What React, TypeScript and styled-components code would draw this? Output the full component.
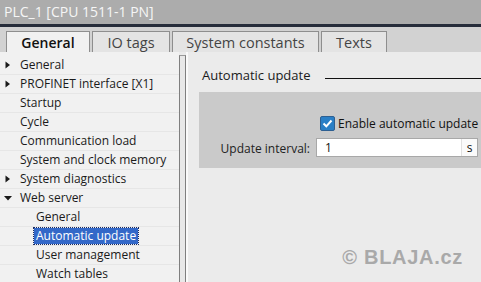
import styled, { createGlobalStyle } from "styled-components";

const GlobalStyle = createGlobalStyle`
  html, body {
    margin: 0;
    padding: 0;
    overflow: hidden;
    background: #ebebeb;
  }
  body {
    font-family: "Open Sans", "Noto Sans", sans-serif;
  }
`;

const Window = styled.div`
  width: 481px;
  height: 282px;
  display: flex;
  flex-direction: column;
  overflow: hidden;
`;

const TitleBar = styled.div`
  height: 24px;
  line-height: 24px;
  padding-left: 4px;
  background: #acacac;
  color: #f6f6f6;
  font-size: 14px;
  border-bottom: 3px solid #272d3b;
`;

const TabStrip = styled.div`
  height: 25px;
  display: flex;
  align-items: flex-end;
  gap: 2px;
  padding-left: 6px;
  background: #d2d2d2;
`;

type TabProps = {
  $active?: boolean;
  $width: number;
};

const Tab = styled.div<TabProps>`
  width: ${(props) => props.$width}px;
  height: 21px;
  box-sizing: border-box;
  display: flex;
  align-items: center;
  justify-content: center;
  border: 1px solid #8e8e8e;
  border-bottom: none;
  background: ${(props) => (props.$active ? "#f1f1f1" : "#e4e4e4")};
  color: ${(props) => (props.$active ? "#111" : "#444")};
  font-size: ${(props) => (props.$active ? 14 : 14.5)}px;
  font-weight: ${(props) => (props.$active ? 600 : 400)};
`;

const Body = styled.div`
  flex: 1;
  display: flex;
  min-height: 0;
`;

const Nav = styled.div`
  flex: none;
  width: 179px;
  background: #f1f1f1;
  padding-top: 4px;
  display: flex;
  flex-direction: column;
`;

type RowProps = {
  $level: number;
};

const NavRow = styled.div<RowProps>`
  height: 19px;
  flex: none;
  display: flex;
  align-items: center;
  padding-left: ${(props) => (props.$level === 1 ? 4 : 34)}px;
  border-bottom: 1px solid #e6e6e6;
  box-sizing: border-box;
  font-size: 12px;
  color: #1a1a1a;
  white-space: nowrap;
`;

const Arrow = styled.span`
  width: 14px;
  display: inline-flex;
  align-items: center;
`;

type LabelProps = {
  $selected?: boolean;
};

const NavLabel = styled.span<LabelProps>`
  padding: 0 2px;
  line-height: 16px;
  background: ${(props) => (props.$selected ? "#3368c8" : "transparent")};
  color: ${(props) => (props.$selected ? "#fff" : "inherit")};
  outline: ${(props) => (props.$selected ? "1px dotted #1a2a60" : "none")};
`;

const Splitter = styled.div`
  flex: none;
  width: 5px;
  margin-top: 3px;
  background: #e8e8e8;
  border-left: 1px solid #7f7f7f;
  border-right: 1px solid #7f7f7f;
  border-top: 1px solid #9a9a9a;
`;

const Content = styled.div`
  flex: 1;
  min-width: 0;
  background: #ebebeb;
  border-left: 2px solid #fafafa;
  display: flex;
  flex-direction: column;
  padding-left: 11px;
`;

const SectionHead = styled.div`
  display: flex;
  align-items: center;
  gap: 15px;
  margin-top: 14px;
  padding-left: 3px;
  height: 18px;
  font-size: 13px;
  color: #1a1a1a;
  white-space: nowrap;
`;

const HeadLine = styled.div`
  flex: 1;
  height: 1px;
  margin-top: 6px;
  background: #111;
`;

const SettingsBox = styled.div`
  margin-top: 8px;
  height: 76px;
  background: #cacaca;
  display: grid;
  grid-template-columns: 111px 1fr;
  grid-template-rows: 20px 20px;
  align-content: end;
  row-gap: 5px;
  padding-bottom: 10px;
  box-sizing: border-box;
`;

const Checkbox = styled.span`
  width: 13px;
  height: 13px;
  border: 1px solid #2d5f91;
  border-radius: 2px;
  background: #2a7fc6;
  display: inline-flex;
  align-items: center;
  justify-content: center;
  margin-right: 3px;
`;

const CheckCell = styled.label`
  grid-column: 2;
  display: flex;
  align-items: center;
  padding-left: 10px;
  font-size: 12px;
  color: #111;
  white-space: nowrap;
`;

const FieldLabel = styled.div`
  display: flex;
  align-items: center;
  justify-content: flex-end;
  font-size: 12px;
  color: #222;
`;

const Field = styled.div`
  margin-left: 6px;
  margin-right: 3px;
  height: 19px;
  display: flex;
  background: #fff;
  border: 1px solid #a8a8a8;
  box-sizing: border-box;
  font-size: 12px;
  color: #111;
`;

const FieldValue = styled.div`
  flex: 1;
  padding-left: 8px;
  line-height: 17px;
`;

const FieldUnit = styled.div`
  width: 15px;
  border-left: 1px solid #e0e0e0;
  text-align: center;
  line-height: 17px;
  background: #fafafa;
`;

const Watermark = styled.div`
  margin-top: auto;
  margin-bottom: 13px;
  align-self: flex-end;
  margin-right: 18px;
  font-family: "Liberation Sans", Arial, sans-serif;
  font-weight: 700;
  font-size: 20px;
  color: #a9a9a9;
  letter-spacing: 0.7px;
  white-space: nowrap;
`;

const navItems = [
  { label: "General", level: 1, arrow: "right" },
  { label: "PROFINET interface [X1]", level: 1, arrow: "right" },
  { label: "Startup", level: 1 },
  { label: "Cycle", level: 1 },
  { label: "Communication load", level: 1 },
  { label: "System and clock memory", level: 1 },
  { label: "System diagnostics", level: 1, arrow: "right" },
  { label: "Web server", level: 1, arrow: "down" },
  { label: "General", level: 2 },
  { label: "Automatic update", level: 2, selected: true },
  { label: "User management", level: 2 },
  { label: "Watch tables", level: 2 },
];

const tabs = [
  { label: "General", width: 84, active: true },
  { label: "IO tags", width: 78 },
  { label: "System constants", width: 147 },
  { label: "Texts", width: 66 },
];

const TreeArrow = ({ dir }: { dir?: string }) => {
  if (!dir) return <Arrow />;
  return (
    <Arrow>
      <svg width="8" height="8" viewBox="0 0 8 8">
        {dir === "right" ? (
          <path d="M1.5 0.5 L6 4 L1.5 7.5 Z" fill="#1a1a1a" />
        ) : (
          <path d="M0 2 L8 2 L4 6.5 Z" fill="#1a1a1a" />
        )}
      </svg>
    </Arrow>
  );
};

const App = () => {
  return (
    <Window>
      <GlobalStyle />
      <TitleBar>PLC_1 [CPU 1511-1 PN]</TitleBar>
      <TabStrip>
        {tabs.map((t) => (
          <Tab key={t.label} $active={t.active} $width={t.width}>
            {t.label}
          </Tab>
        ))}
      </TabStrip>
      <Body>
        <Nav>
          {navItems.map((item, i) => (
            <NavRow key={i} $level={item.level}>
              {item.level === 1 && <TreeArrow dir={item.arrow} />}
              <NavLabel $selected={item.selected}>{item.label}</NavLabel>
            </NavRow>
          ))}
        </Nav>
        <Splitter />
        <Content>
          <SectionHead>
            Automatic update
            <HeadLine />
          </SectionHead>
          <SettingsBox>
            <CheckCell>
              <Checkbox>
                <svg width="11" height="11" viewBox="0 0 11 11">
                  <path
                    d="M1.5 5.5 L4.3 8.3 L9.5 2.5"
                    stroke="#fff"
                    strokeWidth="2"
                    fill="none"
                  />
                </svg>
              </Checkbox>
              Enable automatic update
            </CheckCell>
            <FieldLabel>Update interval:</FieldLabel>
            <Field>
              <FieldValue>1</FieldValue>
              <FieldUnit>s</FieldUnit>
            </Field>
          </SettingsBox>
          <Watermark>© BLAJA.cz</Watermark>
        </Content>
      </Body>
    </Window>
  );
};

export default App;
